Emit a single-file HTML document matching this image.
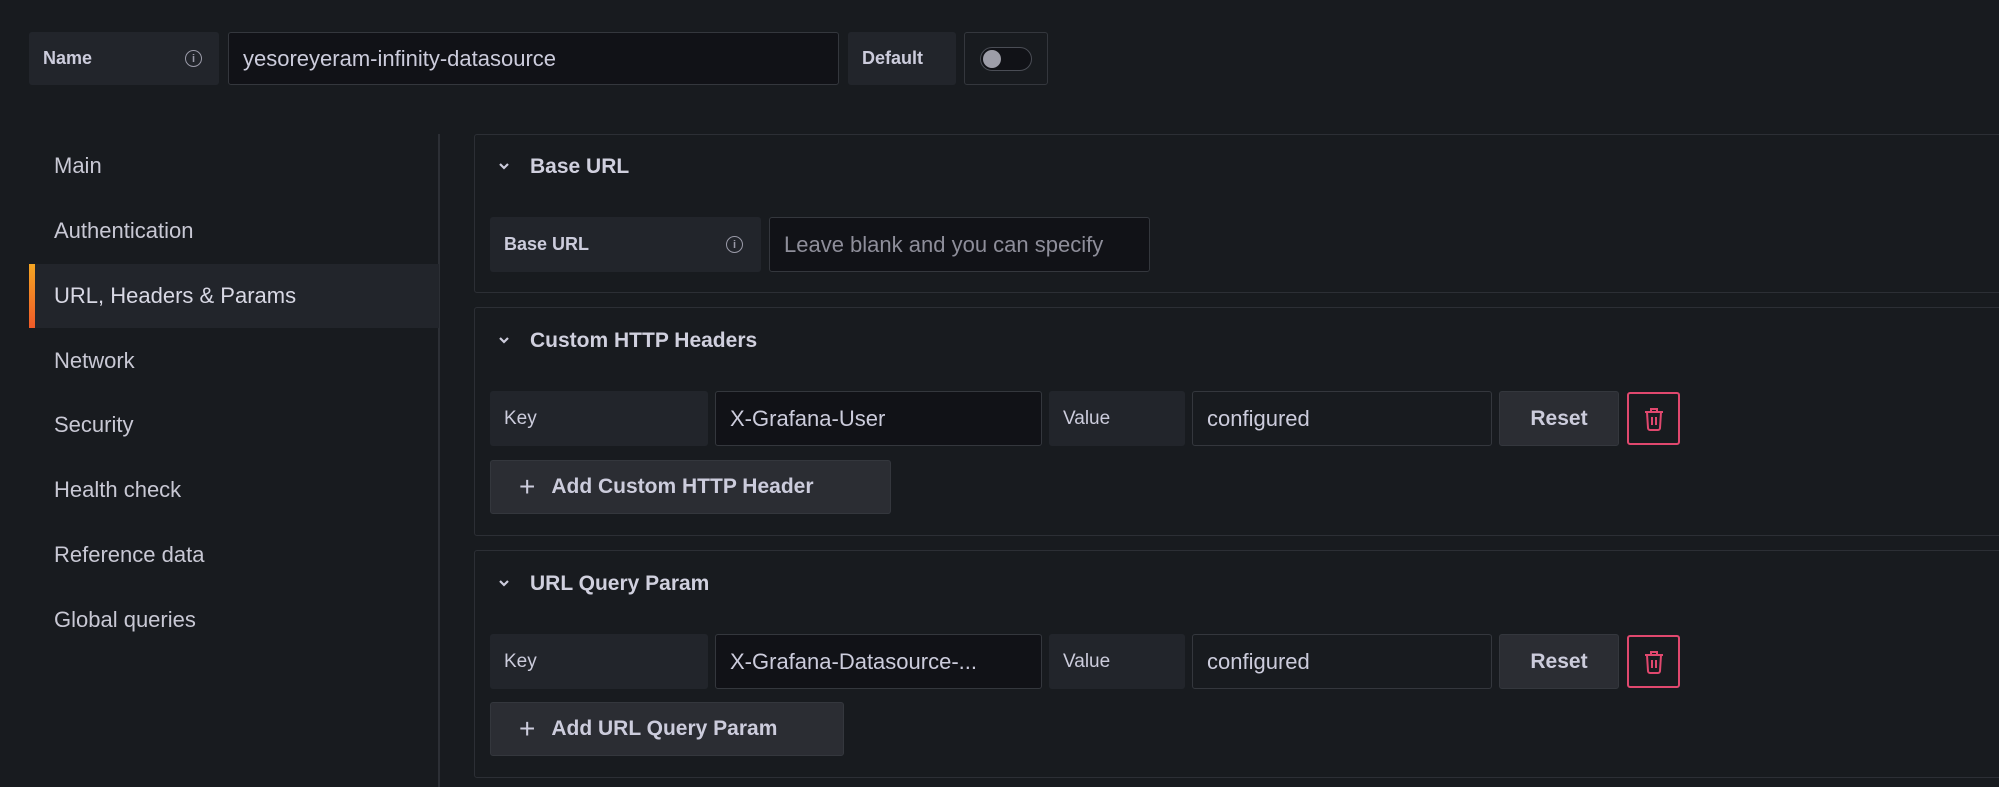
<!DOCTYPE html>
<html><head><style>
*{box-sizing:border-box;margin:0;padding:0}
body{width:1999px;height:787px;background:#181b1f;font-family:"Liberation Sans",sans-serif;color:#ccccdc;position:relative;overflow:hidden}
.a{position:absolute}
.lbl{background:#22252b;border-radius:3px;font-size:19px;font-weight:bold;display:flex;align-items:center;padding-left:14px}
.inp{background:#111217;border:1px solid #34373d;border-radius:3px;font-size:22px;display:flex;align-items:center;padding-left:14px;white-space:nowrap;overflow:hidden}
.inp2{background:#181b1f;border:1px solid #34373d;border-radius:3px;font-size:22px;display:flex;align-items:center;padding-left:14px}
.nav{left:54px;font-size:22px;color:#c8c8d4}
.sec{left:474px;width:1540px;border:1px solid #2c2f35;border-radius:3px}
.hd{font-size:21px;font-weight:bold;color:#d0d0de}
.btn{background:#2b2d33;border:1px solid #34373d;border-radius:3px;font-size:21px;font-weight:bold;display:flex;align-items:center;justify-content:center}
.tr{border:2px solid #e0486e;border-radius:3px;display:flex;align-items:center;justify-content:center}
.info{width:17px;height:17px;border:1.5px solid #9a9aa8;border-radius:50%;font-size:11px;display:flex;align-items:center;justify-content:center;color:#9a9aa8;font-weight:bold}
.chev{position:absolute;left:497px}
</style></head><body>
<div class="a lbl" style="left:29px;top:32px;width:190px;height:53px;font-size:18px">Name<div class="a info" style="left:156px;top:18px">i</div></div>
<div class="a inp" style="left:228px;top:32px;width:611px;height:53px">yesoreyeram-infinity-datasource</div>
<div class="a lbl" style="left:848px;top:32px;width:108px;height:53px;font-size:18px">Default</div>
<div class="a" style="left:964px;top:32px;width:84px;height:53px;border:1px solid #34373d;border-radius:3px"><div class="a" style="left:15px;top:14px;width:52px;height:24px;border:1.5px solid #4a4d55;border-radius:12px;background:#111217"><div class="a" style="left:2px;top:2px;width:18px;height:18px;border-radius:50%;background:#9d9da8"></div></div></div>

<div class="a" style="left:438px;top:134px;width:2px;height:653px;background:#2c2f35"></div>
<div class="a" style="left:29px;top:264px;width:410px;height:64px;background:#22252b"></div>
<div class="a" style="left:29px;top:264px;width:6px;height:64px;background:linear-gradient(#f5a623,#f05a28)"></div>
<div class="a nav" style="top:153px">Main</div>
<div class="a nav" style="top:218px">Authentication</div>
<div class="a nav" style="top:283px;color:#d8d8e4">URL, Headers &amp; Params</div>
<div class="a nav" style="top:348px">Network</div>
<div class="a nav" style="top:412px">Security</div>
<div class="a nav" style="top:477px">Health check</div>
<div class="a nav" style="top:542px">Reference data</div>
<div class="a nav" style="top:607px">Global queries</div>

<div class="a sec" style="top:134px;height:159px"></div>
<svg class="chev" style="top:161px" width="14" height="10" viewBox="0 0 14 10"><path d="M3 3l4 4 4-4" fill="none" stroke="#ccccdc" stroke-width="2.2"/></svg>
<div class="a hd" style="left:530px;top:155px">Base URL</div>
<div class="a lbl" style="left:490px;top:217px;width:271px;height:55px;font-size:18px">Base URL<div class="a info" style="left:236px;top:19px">i</div></div>
<div class="a inp" style="left:769px;top:217px;width:381px;height:55px;color:#8e8e9a;font-size:22px">Leave blank and you can specify</div>

<div class="a sec" style="top:307px;height:229px"></div>
<svg class="chev" style="top:335px" width="14" height="10" viewBox="0 0 14 10"><path d="M3 3l4 4 4-4" fill="none" stroke="#ccccdc" stroke-width="2.2"/></svg>
<div class="a hd" style="left:530px;top:329px">Custom HTTP Headers</div>
<div class="a lbl" style="left:490px;top:391px;width:218px;height:55px;font-weight:normal;font-size:19px">Key</div>
<div class="a inp" style="left:715px;top:391px;width:327px;height:55px">X-Grafana-User</div>
<div class="a lbl" style="left:1049px;top:391px;width:136px;height:55px;font-weight:normal;font-size:19px">Value</div>
<div class="a inp2" style="left:1192px;top:391px;width:300px;height:55px">configured</div>
<div class="a btn" style="left:1499px;top:391px;width:120px;height:55px">Reset</div>
<div class="a tr" style="left:1627px;top:392px;width:53px;height:53px"><svg width="22" height="24" viewBox="0 0 22 24" fill="none" stroke="#e0486e" stroke-width="2"><path d="M2 5h18M8 5V2h6v3M4 5l1 16a2 2 0 002 2h8a2 2 0 002-2l1-16M9 10v8M13 10v8"/></svg></div>
<div class="a btn" style="left:490px;top:460px;width:401px;height:54px;justify-content:flex-start;padding-left:28px"><span style="font-weight:normal;font-size:28px;margin-right:16px">+</span>Add Custom HTTP Header</div>

<div class="a sec" style="top:550px;height:228px"></div>
<svg class="chev" style="top:578px" width="14" height="10" viewBox="0 0 14 10"><path d="M3 3l4 4 4-4" fill="none" stroke="#ccccdc" stroke-width="2.2"/></svg>
<div class="a hd" style="left:530px;top:572px">URL Query Param</div>
<div class="a lbl" style="left:490px;top:634px;width:218px;height:55px;font-weight:normal;font-size:19px">Key</div>
<div class="a inp" style="left:715px;top:634px;width:327px;height:55px">X-Grafana-Datasource-...</div>
<div class="a lbl" style="left:1049px;top:634px;width:136px;height:55px;font-weight:normal;font-size:19px">Value</div>
<div class="a inp2" style="left:1192px;top:634px;width:300px;height:55px">configured</div>
<div class="a btn" style="left:1499px;top:634px;width:120px;height:55px">Reset</div>
<div class="a tr" style="left:1627px;top:635px;width:53px;height:53px"><svg width="22" height="24" viewBox="0 0 22 24" fill="none" stroke="#e0486e" stroke-width="2"><path d="M2 5h18M8 5V2h6v3M4 5l1 16a2 2 0 002 2h8a2 2 0 002-2l1-16M9 10v8M13 10v8"/></svg></div>
<div class="a btn" style="left:490px;top:702px;width:354px;height:54px;justify-content:flex-start;padding-left:28px"><span style="font-weight:normal;font-size:28px;margin-right:16px">+</span>Add URL Query Param</div>
</body></html>
